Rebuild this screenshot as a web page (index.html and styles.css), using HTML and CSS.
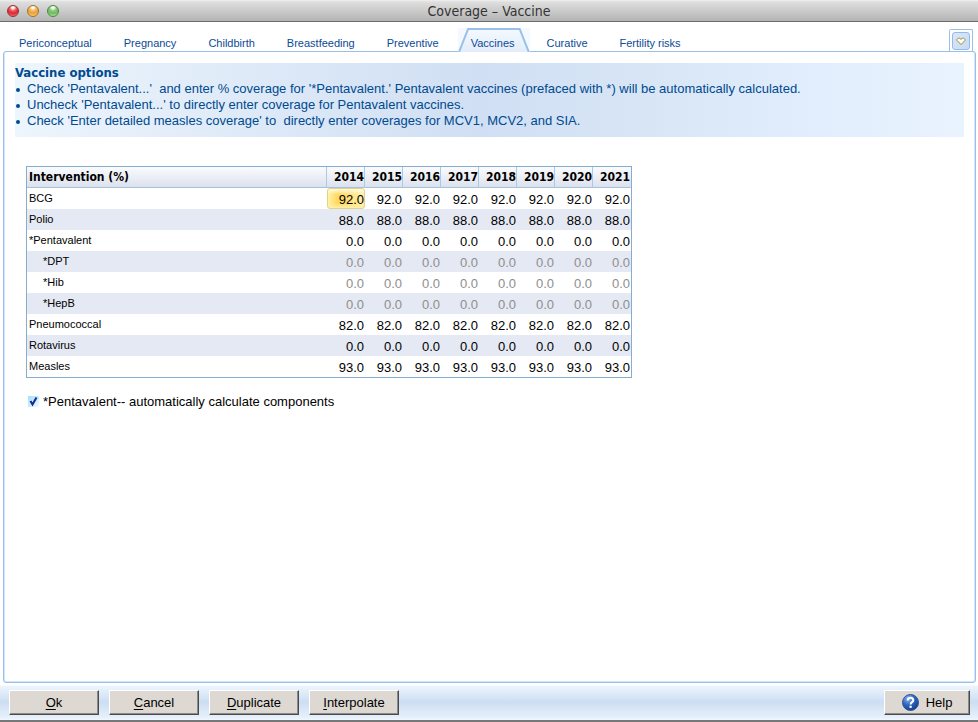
FILE: index.html
```html
<!DOCTYPE html>
<html lang="en">
<head>
<meta charset="utf-8">
<title>Coverage – Vaccine</title>
<link rel="stylesheet" href="styles.css">
</head>
<body>
<header class="titlebar">
  <div class="lights"><span class="light red"></span><span class="light amber"></span><span class="light green"></span></div>
  <h1>Coverage – Vaccine</h1>
</header>
<nav class="tabs">
  <a href="#">Periconceptual</a>
  <a href="#">Pregnancy</a>
  <a href="#">Childbirth</a>
  <a href="#">Breastfeeding</a>
  <a href="#">Preventive</a>
  <a href="#" class="active" aria-current="page"><svg class="tab-shape" viewBox="0 0 71 24" preserveAspectRatio="none" aria-hidden="true"><defs><linearGradient id="tabfill" x1="0" y1="0" x2="0" y2="1"><stop offset="0" stop-color="#f4f9ff"/><stop offset="1" stop-color="#e3edf9"/></linearGradient></defs><path d="M1 24L10 1H61L70 24Z" fill="url(#tabfill)"/><path d="M1 24L10 1H61L70 24" fill="none" stroke="#98c0ea" stroke-width="2"/></svg><span>Vaccines</span></a>
  <a href="#">Curative</a>
  <a href="#">Fertility risks</a>
  <div class="more"><button type="button" aria-label="More tabs"><svg viewBox="0 0 10 8" width="10" height="8" aria-hidden="true"><path d="M1 2.500L2.500 1H3.500L5 2.500L6.500 1H7.500L9 2.500V3.500L5 7.500L1 3.500Z" fill="#fffef2" stroke="#94893f"/></svg></button></div>
</nav>
<main class="panel">
  <section class="notes">
    <h2>Vaccine options</h2>
    <ul>
      <li>Check 'Pentavalent...'&nbsp; and enter % coverage for '*Pentavalent.' Pentavalent vaccines (prefaced with *) will be automatically calculated.</li>
      <li>Uncheck 'Pentavalent...' to directly enter coverage for Pentavalent vaccines.</li>
      <li>Check 'Enter detailed measles coverage' to&nbsp; directly enter coverages for MCV1, MCV2, and SIA.</li>
    </ul>
  </section>
  <table class="grid">
    <thead><tr><th class="name">Intervention (%)</th><th>2014</th><th>2015</th><th>2016</th><th>2017</th><th>2018</th><th>2019</th><th>2020</th><th>2021</th></tr></thead>
    <tbody>
      <tr><th>BCG</th><td class="selected">92.0</td><td>92.0</td><td>92.0</td><td>92.0</td><td>92.0</td><td>92.0</td><td>92.0</td><td>92.0</td></tr>
      <tr><th>Polio</th><td>88.0</td><td>88.0</td><td>88.0</td><td>88.0</td><td>88.0</td><td>88.0</td><td>88.0</td><td>88.0</td></tr>
      <tr><th>*Pentavalent</th><td>0.0</td><td>0.0</td><td>0.0</td><td>0.0</td><td>0.0</td><td>0.0</td><td>0.0</td><td>0.0</td></tr>
      <tr class="auto"><th>*DPT</th><td>0.0</td><td>0.0</td><td>0.0</td><td>0.0</td><td>0.0</td><td>0.0</td><td>0.0</td><td>0.0</td></tr>
      <tr class="auto"><th>*Hib</th><td>0.0</td><td>0.0</td><td>0.0</td><td>0.0</td><td>0.0</td><td>0.0</td><td>0.0</td><td>0.0</td></tr>
      <tr class="auto"><th>*HepB</th><td>0.0</td><td>0.0</td><td>0.0</td><td>0.0</td><td>0.0</td><td>0.0</td><td>0.0</td><td>0.0</td></tr>
      <tr><th>Pneumococcal</th><td>82.0</td><td>82.0</td><td>82.0</td><td>82.0</td><td>82.0</td><td>82.0</td><td>82.0</td><td>82.0</td></tr>
      <tr><th>Rotavirus</th><td>0.0</td><td>0.0</td><td>0.0</td><td>0.0</td><td>0.0</td><td>0.0</td><td>0.0</td><td>0.0</td></tr>
      <tr><th>Measles</th><td>93.0</td><td>93.0</td><td>93.0</td><td>93.0</td><td>93.0</td><td>93.0</td><td>93.0</td><td>93.0</td></tr>
    </tbody>
  </table>
  <div class="option">
    <span class="tick"><input type="checkbox" id="auto" checked><svg viewBox="0 0 11 11" width="11" height="11" aria-hidden="true"><path d="M2.500 5L4.500 8.500L8.500 1.500" fill="none" stroke="#142a86" stroke-width="2"/></svg></span>
    <label for="auto">*Pentavalent-- automatically calculate components</label>
  </div>
</main>
<footer class="actions">
  <button type="button"><span><u>O</u>k</span></button>
  <button type="button"><span><u>C</u>ancel</span></button>
  <button type="button"><span><u>D</u>uplicate</span></button>
  <button type="button"><span><u>I</u>nterpolate</span></button>
  <button type="button" class="help"><svg viewBox="0 0 17 17" width="17" height="17" aria-hidden="true"><defs><radialGradient id="ball" cx=".35" cy=".25" r=".8"><stop offset="0" stop-color="#8fb8ee"/><stop offset=".5" stop-color="#2f66bd"/><stop offset="1" stop-color="#123c8c"/></radialGradient></defs><circle cx="8.500" cy="8.500" r="8" fill="url(#ball)" stroke="#2b569f"/><path d="M5.800 6.500C5.800 3 11.300 3 11.300 6.200C11.300 8.300 8.600 8 8.600 10.500" fill="none" stroke="#fff" stroke-width="2"/><rect x="7.500" y="11.700" width="2.200" height="2.200" fill="#fff"/></svg><span>Help</span></button>
</footer>
</body>
</html>
```
FILE: styles.css
```css
* { box-sizing: border-box; }

body {
  margin: 0;
  min-height: 100vh;
  display: flex;
  flex-direction: column;
  background: #fff;
  color: #000;
  font: 13px/16px Tahoma, "Liberation Sans", sans-serif;
}

h1, h2, ul { margin: 0; padding: 0; }

.titlebar {
  position: relative;
  height: 22px;
  display: flex;
  align-items: center;
  justify-content: center;
  background: linear-gradient(#f0f0f0, #dedede 10%, #b4b4b4);
  border-bottom: 1px solid #6b6b6b;
}
.titlebar h1 {
  font: 14px/20px "DejaVu Sans Condensed", sans-serif;
  color: #333;
}
.lights {
  position: absolute;
  left: 7px;
  top: 5px;
  display: flex;
  gap: 8px;
}
.light {
  width: 12px;
  height: 12px;
  border-radius: 50%;
  border: 1px solid;
}
.red { border-color: #94302f; background: radial-gradient(circle at 50% 15%, #fff 0 8%, #ee5a5e 35%, #dc2731 60%, #ff8f8f); }
.amber { border-color: #a2702a; background: radial-gradient(circle at 50% 15%, #fff 0 8%, #f3b75b 35%, #eda035 60%, #ffe98c); }
.green { border-color: #4b8540; background: radial-gradient(circle at 50% 15%, #fff 0 8%, #8ccb7d 35%, #6dbb5d 60%, #c9f9ac); }

.tabs {
  display: flex;
  align-items: flex-end;
  height: 30px;
  padding: 0 5px 0 3px;
  font-size: 11px;
}
.tabs a {
  position: relative;
  height: 24px;
  padding: 0 16px;
  line-height: 30px;
  color: #0b4a96;
  text-decoration: none;
  white-space: nowrap;
}
.tabs a.active { z-index: 1; }
.tabs .active span { position: relative; }
.tab-shape {
  position: absolute;
  left: 3px;
  top: 0;
  width: calc(100% - 4px);
  height: 24px;
  background: #f3f9ff;
}
.more {
  margin-left: auto;
  width: 24px;
  height: 23px;
  padding: 2px;
  border: 1px solid #98c0ea;
  border-bottom: 0;
  border-radius: 2px 2px 0 0;
}
.more button {
  display: flex;
  align-items: center;
  justify-content: center;
  width: 18px;
  height: 18px;
  padding: 0;
  border: 1px solid #98b9e8;
  border-radius: 3px;
  background: linear-gradient(135deg, #d9e8f8, #c7dbf3);
}

.panel {
  flex: 1;
  margin: -1px 2px 0 3px;
  padding: 11px 11px;
  border: 1px solid #98c0ea;
  border-radius: 3px;
  box-shadow: inset 1px 0 #d4e5f8, inset -1px 0 #d4e5f8, inset 0 -1px #d4e5f8;
}
.notes {
  height: 74px;
  padding-top: 2px;
  color: #004a8f;
  background: linear-gradient(90deg, #edf5fd, #d0dff3 49%, #d8e6f6 68%, #e2eefd 85%, #e9f3fe);
}
.notes h2 { font: bold 13px/16px "DejaVu Sans Condensed", sans-serif; }
.notes ul { list-style: none; }
.notes li {
  position: relative;
  padding-left: 12px;
  white-space: nowrap;
}
.notes li::before {
  content: "";
  position: absolute;
  left: 1px;
  top: 7px;
  width: 4px;
  height: 4px;
  border-radius: 50%;
  background: #004a8f;
}

.grid {
  margin: 29px 0 0 11px;
  border-collapse: separate;
  border-spacing: 0;
  border: 1px solid #85add0;
  table-layout: fixed;
  width: 606px;
}
.grid th, .grid td {
  height: 21px;
  padding: 0 1px;
  text-align: right;
  line-height: 16px;
}
.grid thead { background: linear-gradient(#fafbfd, #dae0ec); }
.grid thead th {
  padding: 0;
  border-bottom: 1px solid #a3c3dc;
  border-right: 1px solid #abc9e1;
  font: bold 12px/16px "DejaVu Sans Condensed", sans-serif;
}
.grid thead th:last-child { border-right-color: transparent; }
.grid thead th.name {
  width: 300px;
  padding-left: 2px;
  text-align: left;
}
.grid tbody th {
  padding: 0 2px 1px;
  text-align: left;
  font-weight: normal;
  font-size: 11px;
}
.grid td { padding-top: 2px; }
.grid tbody tr:nth-child(even) { background: #e5e9f3; }
.grid .auto th { padding-left: 16px; }
.grid .auto td { color: #8e8e8e; }
.grid td.selected {
  padding: 2px 0 0;
  border: 1px solid #dfd391;
  border-radius: 3px;
  background: linear-gradient(#fffbe0, transparent 30% 75%, #fff0a0), linear-gradient(90deg, #fff3a8, #ffd862 25%, #ffdf7a 60%, #fff1b0);
}

.option {
  display: flex;
  align-items: center;
  gap: 4px;
  margin: 15px 0 0 13px;
  line-height: 17px;
}
.tick { position: relative; display: flex; }
.tick input {
  appearance: none;
  width: 11px;
  height: 11px;
  margin: 0;
  background: linear-gradient(135deg, #9fddff, #f3fbff);
}
.tick svg { position: absolute; left: 0; top: 0; pointer-events: none; }

.actions {
  display: flex;
  gap: 10px;
  height: 39px;
  padding: 7px 8px 0 9px;
  border-bottom: 2px solid #777;
  background: linear-gradient(#fff 0 2px, #edf5fe 3px, #cdddf2 19px, #e5f0fc 34px, #f0f7ff);
}
.actions button {
  display: flex;
  align-items: center;
  justify-content: center;
  gap: 7px;
  width: 90px;
  height: 25px;
  padding: 0;
  border: 1px solid;
  border-color: #fff #494a4b #494a4b #fff;
  background: #ddd8d2;
  box-shadow: inset -1px -1px #8d8b88;
  color: #000;
  font: inherit;
}
.actions u { text-underline-offset: 2px; }
.actions .help {
  width: 86px;
  margin-left: auto;
}
```
